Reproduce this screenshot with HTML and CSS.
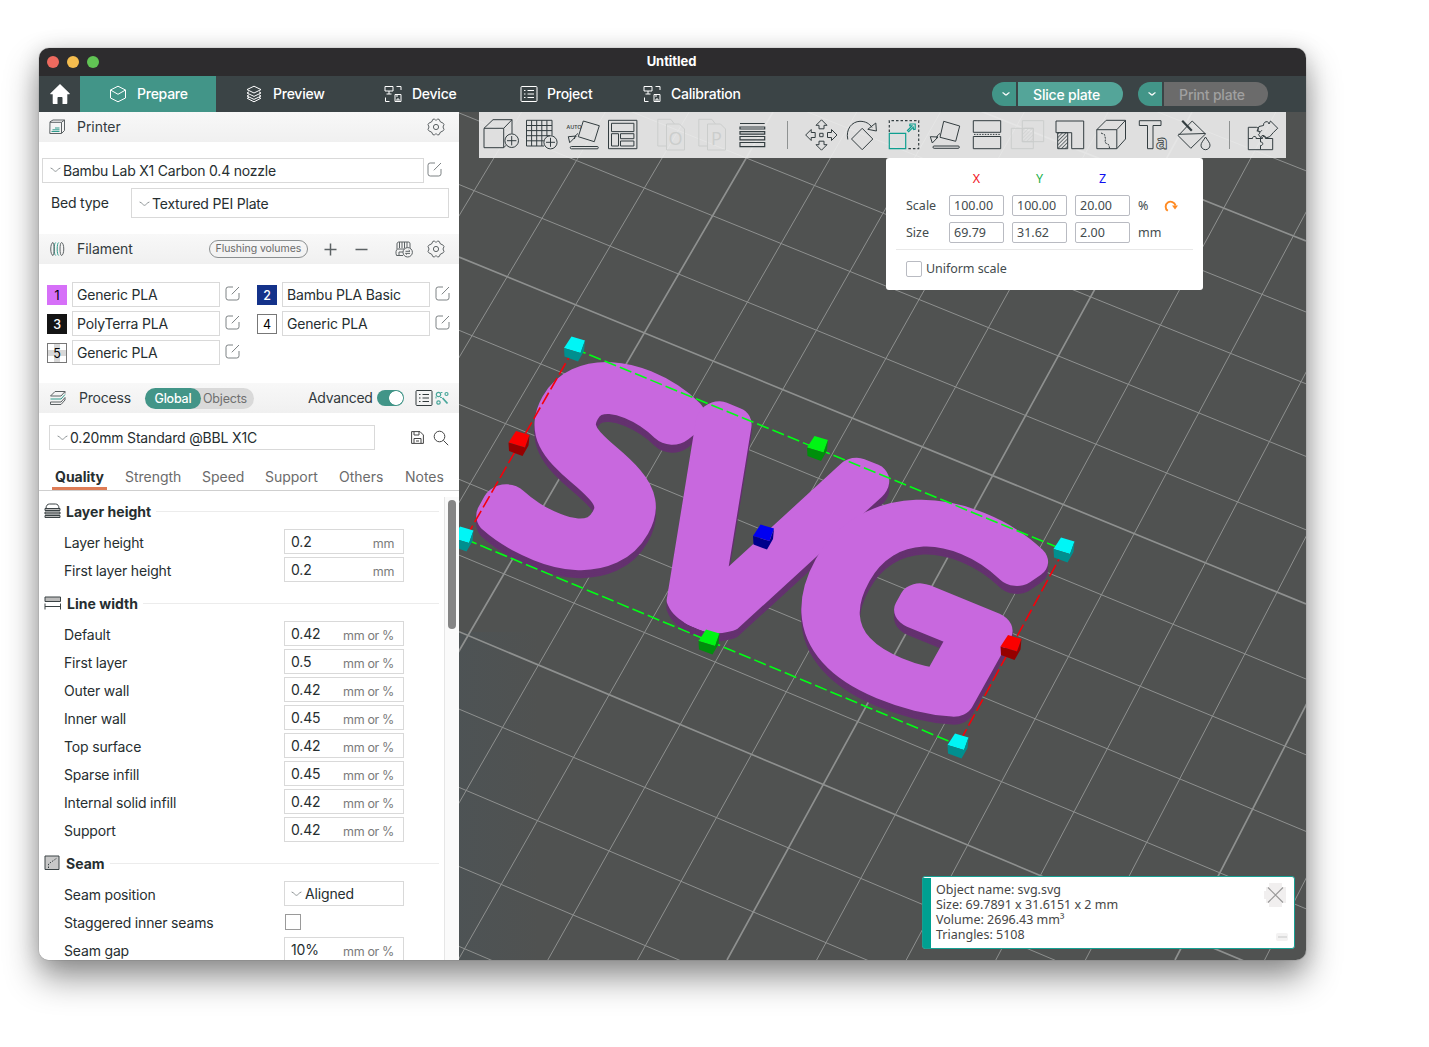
FILE: index.html
```html
<!DOCTYPE html>
<html lang="en">
<head>
<meta charset="utf-8">
<title>Untitled</title>
<link rel="stylesheet" href="styles.css">
</head>
<body>
<svg class="defs" aria-hidden="true">
  <defs>
    <symbol id="i-edit" viewBox="0 0 15 15"><path d="M8 1H3.2A2.2 2.2 0 0 0 1 3.200V11.800A2.200 2.200 0 0 0 3.200 14H11.800A2.200 2.200 0 0 0 14 11.800V7M6.800 8.300L14 1"/></symbol>
    <symbol id="i-chev" viewBox="0 0 11 6"><path d="M.6 1C3 1.500 4 4.300 5.500 4.300S8 1.500 10.400 1"/></symbol>
    <symbol id="i-gear" viewBox="0 0 18 18"><path d="M6 1.200h1.500l1 .8h1l1-.8H12l1.500 2.800 2.200.8 1.300 1.700-1 2.500 1 2.500-1.300 1.700-2.200.8L12 16.800h-1.500l-1-.8h-1l-1 .8H6L4.500 14l-2.200-.8L1 11.500 2 9 1 6.500l1.300-1.700L4.500 4z"/><circle cx="9" cy="9" r="2.600"/></symbol>
    <symbol id="i-device" viewBox="0 0 18 18"><path d="M1 1.500h8v4.500H1zM5 6v3M2.500 9h5M12.500 1.500H17v3.500M1.500 12.500v4h4M11 9.500h6v7h-6zM13 16.500v-2.500h2v2.500M13 9.500v2.500"/></symbol>
    <symbol id="i-list" viewBox="0 0 18 18"><rect x="1" y="1.500" width="16" height="15" rx="1"/><path d="M4 5.500h1.500M7.500 5.500H14M4 9h1.500M7.500 9H14M4 12.500h1.500M7.500 12.500H14"/></symbol>
    <g id="cube">
      <path class="cube-top" d="M-3-12.500L10.500-8.500 6 4-10.500-1z"/>
      <path class="cube-side" d="M-10.500-1L6 4 10.500-8.500 9.500 2 3.500 12.500-10 7.500z"/>
    </g>
    <clipPath id="round-foot"><path d="M150-60H500V200L398 222C382 290 352 306 325 306C290 306 266 296 252 250L150 225z"/></clipPath>
    <g id="letters" class="letters">
      <text class="ls" transform="translate(3 270) scale(3.480 3.480)">S</text>
      <g clip-path="url(#round-foot)"><text class="lv" transform="translate(212 325) scale(3.740 4.300)">V</text></g>
      <text class="lg" transform="translate(421 271) scale(3.780 3.460)">G</text>
    </g>
    <pattern id="hatch" width="2.600" height="2.600" patternUnits="userSpaceOnUse" patternTransform="rotate(45)"><path d="M0 0v2.600" stroke="#333d40" stroke-width="1.300"/></pattern>
    <pattern id="hatch-off" width="2.600" height="2.600" patternUnits="userSpaceOnUse" patternTransform="rotate(45)"><path d="M0 0v2.600" stroke="#cbcdcc" stroke-width="1"/></pattern>
    <linearGradient id="tint" x1="0" x2="1"><stop offset="0" stop-color="#4a5459" stop-opacity=".45"/><stop offset="1" stop-color="#4a5459" stop-opacity="0"/></linearGradient>
  </defs>
</svg>
<div class="window">
  <header class="titlebar">
    <div class="lights"><i class="red"></i><i class="amber"></i><i class="green"></i></div>
    <span>Untitled</span>
  </header>
  <nav class="nav">
    <a class="home"><svg width="20" height="20" viewBox="0 0 20 20"><path d="M10 0L.5 9.300c-.5.500-.2 1 .4 1H2.700V19c0 .6.400 1 1 1H7.500V14c0-.6.400-1 1-1h3c.6 0 1 .4 1 1v6h3.800c.6 0 1-.4 1-1v-8.700h1.800c.6 0 .9-.5.400-1z" fill="#fff"/></svg></a>
    <a class="tab prepare"><svg class="ico" width="18" height="18" viewBox="0 0 18 18"><path d="M9 1.200L16.500 5v8L9 16.800 1.500 13V5zM1.500 5L9 9.300 16.500 5"/></svg>Prepare</a>
    <a class="tab preview"><svg class="ico" width="18" height="18" viewBox="0 0 18 18"><path d="M9 1.200l7 3.400-7 3.400-7-3.400zM4 6.800L2 8l7 3.400L16 8l-2-1.200M4 9.800L2 11l7 3.400L16 11l-2-1.200M4 12.300l-1.800 1L9 16.800l6.800-3.500-1.800-1"/></svg>Preview</a>
    <a class="tab device"><svg class="ico" width="18" height="18"><use href="#i-device"/></svg>Device</a>
    <a class="tab project"><svg class="ico" width="18" height="18"><use href="#i-list"/></svg>Project</a>
    <a class="tab calibration"><svg class="ico" width="18" height="18"><use href="#i-device"/></svg>Calibration</a>
    <div class="actions">
      <div class="split"><button class="drop"><svg width="8" height="4" viewBox="0 0 8 4"><path d="M.5.600C2 .8 3 3 4 3S6 .8 7.500.600"/></svg></button><button class="main">Slice plate</button></div>
      <div class="split off"><button class="drop"><svg width="8" height="4" viewBox="0 0 8 4"><path d="M.5.600C2 .8 3 3 4 3S6 .8 7.500.600"/></svg></button><button class="main">Print plate</button></div>
    </div>
  </nav>
  <div class="body">
    <aside class="sidebar">
      <div class="head">
        <svg class="line" width="18" height="16" viewBox="0 0 18 16"><path d="M2 2.800L5 1h11.500v10.500l-3 3H1.800zM2 3.300h11.500v11M13.500 3.300L16.500 1"/><path class="teal" d="M3.500 12.500h8M4.500 10.800h7M7 9h4.500"/></svg>
        <span class="name">Printer</span>
        <svg class="line gear" width="18" height="18"><use href="#i-gear"/></svg>
      </div>
      <div class="printer-row"><div class="box printer-box"><svg class="chev"><use href="#i-chev"/></svg>Bambu Lab X1 Carbon 0.4 nozzle</div><svg class="edit"><use href="#i-edit"/></svg></div>
      <div class="bed-row"><span>Bed type</span><div class="box bed-box"><svg class="chev"><use href="#i-chev"/></svg>Textured PEI Plate</div></div>
      <div class="head filament">
        <svg class="line" width="18" height="16" viewBox="0 0 18 16"><path d="M4 1.500C1 2 1 14 4 14.500M12.500 1.500c3 .5 3 12.500 0 13"/><path class="teal" d="M6.700 1.500c-2 .5-2 12.500 0 13M9.700 1.500c-2 .5-2 12.500 0 13"/><path d="M4 1.500c1.500 1 1.500 12 0 13M12.500 1.500c-2 .5-2 12.500 0 13"/></svg>
        <span class="name">Filament</span>
        <span class="flush">Flushing volumes</span>
        <svg class="line plus" width="13" height="13" viewBox="0 0 13 13"><path d="M6.500.500v12M.5 6.500h12"/></svg>
        <svg class="line minus" width="13" height="13" viewBox="0 0 13 13"><path d="M.5 6.500h12"/></svg>
        <svg class="line ams" width="18" height="17" viewBox="0 0 18 17"><path d="M8 14.500H1.500c-1-3-.6-5.500 1-6.500h12M2 8V3c0-1.500 1-2 2-2h9c1.500 0 2 .5 2 2v4M4.500 1v6M7 1v6M9.500 1v6M12 1v6M4 14.500V11h4"/><circle cx="12.700" cy="11.300" r="4.700" fill="#f3f3f3"/><path d="M10.500 10.300h4.500l-1.300-1.200M15 12.400h-4.500l1.300 1.200"/></svg>
        <svg class="line gear" width="18" height="18"><use href="#i-gear"/></svg>
      </div>
      <div class="filaments">
        <div class="fil"><b class="sw c1">1</b><div class="box">Generic PLA</div><svg class="edit"><use href="#i-edit"/></svg></div>
        <div class="fil"><b class="sw c2">2</b><div class="box">Bambu PLA Basic</div><svg class="edit"><use href="#i-edit"/></svg></div>
        <div class="fil"><b class="sw c3">3</b><div class="box">PolyTerra PLA</div><svg class="edit"><use href="#i-edit"/></svg></div>
        <div class="fil"><b class="sw c4">4</b><div class="box">Generic PLA</div><svg class="edit"><use href="#i-edit"/></svg></div>
        <div class="fil"><b class="sw c5">5</b><div class="box">Generic PLA</div><svg class="edit"><use href="#i-edit"/></svg></div>
      </div>
      <div class="head process">
        <svg class="line" width="18" height="16" viewBox="0 0 18 16"><path d="M6 1.500h10L12 6H1.500zM16 1.500v2"/><path class="teal" d="M1.500 9H12L16 4.500"/><path d="M1.500 12v2.500H12L16 10V7.500M1.500 12H12L16 7.500"/></svg>
        <span class="name">Process</span>
        <div class="seg"><b>Global</b><span>Objects</span></div>
        <span class="adv">Advanced</span><i class="toggle"></i>
        <svg class="line lst" width="18" height="18"><use href="#i-list"/></svg>
        <svg class="line find" width="14" height="14" viewBox="0 0 14 14"><g class="teal"><circle cx="3.500" cy="3.500" r="2.200"/><circle cx="11.500" cy="3" r="1.500"/><circle cx="3.500" cy="11.500" r="1.700"/><path d="M7.500 7l5 5.500M6.500 1v1M.5 6.500h1M6 6v1" stroke-width="1.800"/></g></svg>
      </div>
      <div class="preset"><div class="box preset-box"><svg class="chev"><use href="#i-chev"/></svg>0.20mm Standard @BBL X1C</div>
        <svg class="line save" width="13" height="13" viewBox="0 0 13 13"><path d="M.6.600h8.400L12.400 4v8.400H.6zM3 .6V4h5V.6M3 12.400V7.500h7v4.900M5 10h3"/></svg>
        <svg class="line" width="16" height="16" viewBox="0 0 16 16"><circle cx="6.500" cy="6.500" r="5.300"/><path d="M10.400 10.400l4.800 4.800"/></svg></div>
      <div class="qtabs"><b>Quality</b><span>Strength</span><span>Speed</span><span>Support</span><span>Others</span><span>Notes</span></div>
      <div class="scroll">
        <div class="opts">
          <h3><svg class="line" width="17" height="16" viewBox="0 0 17 16"><path d="M2 5.500C2 2.500 3.500 1 5.500 1h6c2 0 3.500 1.500 3.500 4.500"/><path d="M1 5.500h15v2H1zM1 9h15v2H1zM1 12.500h15v2H1z" fill="#bbb"/></svg>Layer height</h3>
          <div class="row"><label>Layer height</label><div class="val">0.2<em>mm</em></div></div>
          <div class="row"><label>First layer height</label><div class="val">0.2<em>mm</em></div></div>
          <h3><svg class="line" width="18" height="14" viewBox="0 0 18 14"><path d="M1 1h15.500v4.500H1z" fill="#bbb"/><path d="M1 7.500v6M16.500 7.500v6M1 10.500h15.500"/></svg>Line width</h3>
          <div class="row"><label>Default</label><div class="val">0.42<em>mm or %</em></div></div>
          <div class="row"><label>First layer</label><div class="val">0.5<em>mm or %</em></div></div>
          <div class="row"><label>Outer wall</label><div class="val">0.42<em>mm or %</em></div></div>
          <div class="row"><label>Inner wall</label><div class="val">0.45<em>mm or %</em></div></div>
          <div class="row"><label>Top surface</label><div class="val">0.42<em>mm or %</em></div></div>
          <div class="row"><label>Sparse infill</label><div class="val">0.45<em>mm or %</em></div></div>
          <div class="row"><label>Internal solid infill</label><div class="val">0.42<em>mm or %</em></div></div>
          <div class="row"><label>Support</label><div class="val">0.42<em>mm or %</em></div></div>
          <h3><svg class="line" width="17" height="16" viewBox="0 0 17 16"><path d="M1 1h14v13.500H1z" fill="#c8c8c8"/><path d="M4.500 13V9L13 3" stroke-dasharray="1.500 1.300"/></svg>Seam</h3>
          <div class="row"><label>Seam position</label><div class="val pick"><svg class="chev"><use href="#i-chev"/></svg>Aligned</div></div>
          <div class="row"><label>Staggered inner seams</label><i class="check"></i></div>
          <div class="row"><label>Seam gap</label><div class="val">10%<em>mm or %</em></div></div>
        </div>
        <div class="track"><i></i></div>
      </div>
    </aside>
    <main class="stage">
      <svg class="scene" width="847" height="848" viewBox="0 0 847 848">
        <rect y="520" width="80" height="328" fill="url(#tint)"/>
        <g class="grid">
          <path d="M0-277.300L847 58.800M0-139.900L847 200M0-69.900L847 271.800M0 .9L847 344.400M0 72.500L847 417.800M0 218.300L847 567M0 292.400L847 642.800M0 367.300L847 719.400M0 443.100L847 796.800M0 597.100L847 954M0 675.400L847 1033.800M0 754.500L847 1114.400M0 834.400L847 1195.800"/>
          <path d="M62.600 0L-448.800 848M146.400 0L-359.200 848M230.200 0L-269.600 848M397.800 0L-90.400 848M481.600 0L-.8 848M565.400 0L88.800 848M649.200 0L178.400 848M816.800 0L357.600 848M900.600 0L447.200 848M984.400 0L536.800 848M1068.200 0L626.400 848M1235.800 0L805.600 848"/>
          <path class="bold" d="M0-209L847 129M0 145L847 492M0 519.700L847 875M314 0L-180 848M733 0L268 848M1152 0L716 848"/>
        </g>
        <g class="side">
          <use href="#letters" transform="matrix(.702 .288 -.34 .61 115 245)"/>
          <use href="#letters" transform="matrix(.702 .288 -.34 .61 115 243)"/>
          <use href="#letters" transform="matrix(.702 .288 -.34 .61 115 241)"/>
          <use href="#letters" transform="matrix(.702 .288 -.34 .61 115 239)"/>
        </g>
        <use class="face" href="#letters" transform="matrix(.702 .288 -.34 .61 115 237)"/>
        <g class="bounds">
          <path class="bx" d="M115 236.500L605 438M6 427L499 633"/>
          <path class="by" d="M115 236.500L6 427M605 438L499 633"/>
        </g>
        <g class="cyan"><use href="#cube" x="115.500" y="237"/><use href="#cube" x="605" y="438"/><use href="#cube" x="499" y="634"/><use href="#cube" x="4" y="427"/></g>
        <g class="redc"><use href="#cube" x="60" y="331.500"/><use href="#cube" x="552" y="535.500"/></g>
        <g class="greenc"><use href="#cube" x="358.500" y="336.500"/><use href="#cube" x="250" y="530"/></g>
        <g class="bluec"><use href="#cube" x="304.500" y="425"/></g>
      </svg>
      <div class="toolbar">
        <div class="ga">
          <svg viewBox="0 0 36 36"><path d="M1 11.300h19.700v19.400H1zM1 11.300L10 2.700h19l-8.300 8.600M29 2.700v14M20.700 30.700L23 28.300"/><circle cx="28.700" cy="23.700" r="6.800"/><path d="M28.700 19v9.400M24 23.700h9.400"/></svg>
          <svg viewBox="0 0 36 36"><path d="M20 29H2.500V3.300H28V18.500M2.500 8.500H28M2.500 13.600H28M2.500 18.700H26M2.500 23.800H19.800M7.600 3.300V29M12.700 3.300V29M17.800 3.300V29M22.900 3.300V19"/><circle cx="26.500" cy="25.300" r="6.600"/><path d="M26.500 20.800v9M22 25.300h9"/></svg>
          <svg viewBox="0 0 36 36"><text class="auto" x="1.500" y="12">AUTO</text><path d="M18.300 4l16 4.700-5 16-16-5zM3.300 19.700l8-.7-6.600 6.700zM9.500 22c0-2.500 1-4 3.500-5.500"/><rect x="5.300" y="29.500" width="28" height="2.300" rx="1.100"/></svg>
          <svg viewBox="0 0 36 36"><path d="M2.500 3.300h28.400v28.400H2.500zM5.500 6.300h22.400v8.300H5.500zM5.500 16.700h7V29h-7zM14.500 16.700h13.400v5H14.500zM14.500 24h13.400v5H14.500z"/></svg>
        </div>
        <div class="gb">
          <svg class="dis" viewBox="0 0 36 36"><path d="M13.500 7h13l5 5v21h-18zM13.500 29H4.800V2.300h13l3.500 4.500"/><text class="dl" x="15.500" y="27.500">O</text></svg>
          <svg class="dis" viewBox="0 0 36 36"><path d="M13.500 7h13l5 5v21h-18zM13.500 29H4.800V2.300h13l3.500 4.500"/><text class="dl" x="17" y="27.500">P</text></svg>
          <svg viewBox="0 0 36 36"><path d="M5 6.500h24.700M5 10h24.700v2H5zM5 14.700h24.700v2.500H5zM5 19.500h24.700v3.300H5zM5 25.500h24.700v4.200H5z" stroke-width="1.200"/></svg>
        </div>
        <i class="sep"></i>
        <div class="gc">
          <svg viewBox="0 0 36 36"><path d="M18.500 2.800l5.500 5.500h-3v3.500h-5V8.300h-3zM18.500 33.200l5.500-5.500h-3v-3.500h-5v3.500h-3zM2.700 18l5.500-5.500v3h4v5h-4v3zM34 18l-5.500-5.500v3h-4v5h4v3zM16.700 16.300h3.400v3.400h-3.400z"/></svg>
          <svg viewBox="0 0 36 36"><path d="M18.200 11.300L28.800 22 18.200 32.700 7.500 22zM3.800 22.500C1.500 12 8 4.500 16 4.300c5.500 0 9.500 2.200 12 6.200M31.800 6l.6 8-8.600-1.700z"/></svg>
          <svg viewBox="0 0 36 36"><path d="M3.300 15V3.700H32.700V31.700H21" stroke-dasharray="2.500 2" stroke-width="1.200"/><path class="teal" stroke-width="1.200" d="M3.300 16.300h16.400v15.400H3.300zM21.500 13.500l4.500-4.500-2.300-.3.300-1.700h5.200v5.200l-1.700.3-.3-2.300-4.500 4.500z"/></svg>
          <svg viewBox="0 0 36 36"><path d="M16.700 4.300l16 4.700-4 15.300-15.700-4zM3.300 19.700l7.700.3-5.700 6zM9.500 22c0-2.500 1-4 3.500-5.500"/><rect x="6" y="29" width="26.300" height="2.300" rx="1.100"/></svg>
          <svg viewBox="0 0 36 36"><path d="M4.300 3.700h27.400v11.600H4.300zM4.300 19.500h27.400v12.200H4.300z"/><path d="M5 17.400h26" stroke-dasharray="1.500 1.200"/></svg>
          <svg class="dis" viewBox="0 0 36 36"><path d="M1.300 11.300h22v20.400h-22zM12.300 3.700h21.400v21H12.300z"/><path d="M12.300 11.300h11v13.400h-11z" fill="url(#hatch-off)"/></svg>
          <svg viewBox="0 0 36 36"><path d="M4 4h27.700v27.700h-12v-16H4z"/><path d="M5.700 15.700h10v16h-10z" fill="url(#hatch)"/></svg>
          <svg viewBox="0 0 36 36"><path d="M3.800 12.700h20v19h-20zM3.800 12.700l9.400-9.400h19.300l-8.700 9.400M32.500 3.300V22l-8.700 9.700"/><path d="M8 16l3.500 1.500 1 4.500-.5 3.500 4 2.500.5 3" stroke-dasharray="2 1"/></svg>
          <svg viewBox="0 0 36 36"><path d="M4.300 3.700H26V8.500H18V31.700H12.500V8.500H4.300z"/><text class="ta" x="20.700" y="31.500">a</text></svg>
          <svg viewBox="0 0 36 36"><path d="M16.200 4L29.500 17 14.800 31.300 2.200 18.700zM2.200 17.300L29.500 16.500"/><path d="M6.200 3.700l9.600 10" stroke-width="2.200"/><path d="M29.500 20c2.500 4 4.500 6 4.500 8.200a4.500 4.500 0 0 1-9 0c0-2.200 2-4.200 4.500-8.200z"/></svg>
        </div>
        <i class="sep s2"></i>
        <svg class="puz" viewBox="0 0 36 36"><path d="M3.300 10.300h8.500c1.500 0 2 2 .8 3 0 2 3.500 2 4.200 0M3.300 10.300v22.400h24.400V21.500h-7c.8-3-4-3-3.200 0H11c1-3-4-2.500-3.500 0H3.300M15.500 32.500v-4c3 .5 3-4 0-3.500v-4M14 9.500l4.500-1c-.5-4 5-5.500 5.500-1.500l1.500-3 7.200 7.200-4.500 4.500-3.500 4-4.500 1.500c.5-4-5-3.500-4 0l-2.700-3.500c2.500-2 1-5-1.500-3.500z"/></svg>
      </div>
      <section class="scale">
        <div class="sgrid">
          <i></i><b class="x">X</b><b class="y">Y</b><b class="z">Z</b><i></i><i></i>
          <span>Scale</span><div class="num">100.00</div><div class="num">100.00</div><div class="num">20.00</div><span>%</span><svg width="14" height="14" viewBox="0 0 14 14"><path d="M3.800 11.800A5 5 0 1 1 11.500 6.500" fill="none" stroke="#ff8a22" stroke-width="1.900"/><path d="M8 6.500h6l-3 4z" fill="#ff8a22"/></svg>
          <span>Size</span><div class="num">69.79</div><div class="num">31.62</div><div class="num">2.00</div><span>mm</span><i></i>
        </div>
        <div class="uni"><i></i>Uniform scale</div>
      </section>
      <section class="info">
        <div class="txt">Object name: svg.svg<br>Size: 69.7891 x 31.6151 x 2 mm<br>Volume: 2696.43 mm³<br>Triangles: 5108</div>
        <div class="ctl"><svg width="26" height="26" viewBox="0 0 26 26"><path d="M7 1h13v24H7zM2 9h4v8H2zM4 5h20v16H4z" fill="#f1efef"/><path d="M6 5.500l15 15M21 5.500l-15 15" stroke="#999" stroke-width="1.200"/></svg><i></i></div>
      </section>
    </main>
  </div>
</div>
</body>
</html>
```
FILE: styles.css
```css
* { box-sizing: border-box; }
html { height: 1047px; overflow: hidden; }
body { margin: 0; padding: 48px 0 0 39px; height: 1047px; background: #fff; font: 14px/18px Inter, "Liberation Sans", sans-serif; color: #262e30; overflow: hidden; }
.defs { position: absolute; width: 0; height: 0; }
svg { flex: none; fill: none; }
i, em { font-style: normal; }
.window { width: 1267px; height: 912px; border-radius: 10px; overflow: hidden; display: flex; flex-direction: column; box-shadow: 0 0 1px rgba(0,0,0,.6), 0 18px 34px rgba(0,0,0,.42), 0 2px 22px rgba(0,0,0,.14); background: #fff; }

.titlebar { height: 28px; background: #2d2c2e; display: flex; align-items: center; color: #fff; font-size: 13px; font-weight: 700; letter-spacing: -.05px; }
.titlebar span { flex: 1; text-align: center; padding-right: 78px; padding-bottom: 2px; }
.lights { display: flex; gap: 8px; width: 76px; padding-left: 8px; }
.lights i { width: 12px; height: 12px; border-radius: 50%; }
.red { background: #ee6a5f; } .amber { background: #f5bd4f; } .green { background: #61c454; }

.nav { height: 36px; background: #3b4446; display: flex; color: #fff; font-weight: 500; letter-spacing: -.25px; }
.nav a { display: flex; align-items: center; }
.home { width: 41px; padding-left: 11px; }
.tab { padding-left: 29px; gap: 10px; }
.ico { stroke: #fff; stroke-width: 1; }
.prepare { width: 136px; background: #429588; }
.preview { width: 138px; }
.device { width: 136px; padding-left: 30px; }
.project { width: 123px; padding-left: 30px; gap: 9px; }
.calibration { width: 160px; padding-left: 30px; }
.actions { margin-left: auto; margin-right: 38px; display: flex; align-items: center; gap: 15px; }
.split { display: flex; gap: 2px; height: 24px; }
.split button { border: 0; padding: 0; color: #fff; font: 500 14px/24px Inter, sans-serif; letter-spacing: -.2px; }
.drop { width: 24px; background: #429588; border-radius: 12px 0 0 12px; display: flex; align-items: center; justify-content: center; }
.drop svg { stroke: #fff; stroke-width: 1.2; margin-left: 4px; }
.split .main { width: 105px; padding: 1px 8px 0 0; background: #54a599; border-radius: 0 12px 12px 0; }
.split.off .main { width: 104px; background: #6b6b6b; color: #a0a0a0; }

.body { flex: 1; min-height: 0; display: grid; grid-template-columns: 420px 1fr; }
.sidebar { display: flex; flex-direction: column; min-height: 0; background: #fff; letter-spacing: -.15px; }
.head { height: 30px; flex: none; display: flex; align-items: center; padding: 0 14px 0 9px; background: linear-gradient(#f8f8f8, #f0f0f0); }
.head .name { margin-left: 11px; letter-spacing: -.04px; color: #323a3d; }
.line { stroke: #5c6264; stroke-width: 1; }
.teal { stroke: #2f9a8b; }
.gear { margin-left: auto; }
.box { border: 1px solid #d9d9d9; height: 25px; display: flex; align-items: center; background: #fff; padding-left: 4px; white-space: nowrap; }
.chev { width: 11px; height: 6px; stroke: #8d9395; margin: -1px 2px 0 3px; }
.edit { width: 15px; height: 15px; stroke: #7d8284; }
.printer-row { display: flex; margin: 16px 0 0 3px; gap: 3px; align-items: center; }
.printer-row .edit, .fil .edit { margin-top: -2px; }
.printer-box { width: 382px; padding-left: 4px; letter-spacing: -.21px; }
.bed-row { display: flex; align-items: center; margin: 5px 0 16px 12px; }
.bed-row span { width: 80px; letter-spacing: -.2px; }
.bed-box { width: 318px; height: 30px; padding-top: 2px; letter-spacing: -.2px; }

.filament { padding-left: 10px; }
.filament .name { margin-left: 10px; }
.flush { margin-left: 76px; width: 99px; height: 18px; border: 1px solid #8b8f90; border-radius: 9px; font-size: 10.5px; line-height: 15px; color: #6b6b6b; text-align: center; letter-spacing: -.05px; white-space: nowrap; margin-right: 16px; flex: none; }
.minus { margin-left: 18px; }
.plus, .minus { stroke-width: 1.500; }
.ams { margin-left: 27px; }
.ams + .gear { margin-left: auto; }
.filaments { display: grid; grid-template-columns: 210px 200px; row-gap: 4px; padding: 18px 0 18px 8px; }
.fil { display: flex; align-items: center; }
.fil .box { width: 148px; letter-spacing: -.17px; margin: 0 5px; padding-top: 1px; }
.sw { width: 20px; height: 20px; font-size: 12.5px; font-weight: 400; line-height: 21px; text-align: center; color: #000; }
.c1 { background: #d670f8; }
.c2 { background: #14328a; color: #fff; font-weight: 500; }
.c3 { background: #141414; color: #fff; font-weight: 500; }
.c4, .c5 { border: 1px solid #777; line-height: 19px; }
.c5 { background: linear-gradient(#d8d8d8, #d8d8d8) 6px 0 / 6px 18px no-repeat, linear-gradient(#d8d8d8, #d8d8d8) 0 6px / 18px 6px no-repeat, #fff; }

.process { padding-left: 10px; }
.process .name { margin-left: 12px; width: 52px; letter-spacing: -.2px; }
.seg { display: flex; margin-left: 14px; width: 109px; height: 21px; border-radius: 11px; background: #d9d9d9; font-size: 12.5px; line-height: 21px; letter-spacing: -.2px; flex: none; }
.seg b { width: 56px; border-radius: 11px; background: #429588; color: #fff; font-weight: 500; text-align: center; }
.seg span { padding-left: 2px; color: #6f6f6f; }
.adv { margin-left: 54px; letter-spacing: -.3px; width: 64px; color: #323a3d; flex: none; }
.toggle { width: 27px; height: 16px; border-radius: 8px; margin-left: 5px; background: radial-gradient(circle at 19px 8px, #fff 6.500px, #429588 7.200px); flex: none; }
.lst { margin-left: 11px; stroke: #333b3d; flex: none; }
.find { margin-left: 2px; margin-right: -6px; }
.find .teal { stroke: #4aa79b; stroke-width: 1.2; }

.preset { display: flex; align-items: center; padding: 12px 0 0 10px; }
.preset-box { width: 326px; letter-spacing: -.18px; padding-top: 1px; }
.save { margin: 0 9px 0 36px; }
.preset .line { stroke: #444; }
.qtabs { margin-top: 15px; height: 26px; padding-left: 13px; border-bottom: 1px solid #cfcfcf; display: flex; color: #6b6b6b; line-height: 24px; letter-spacing: -.02px; }
.qtabs > * { flex: none; }
.qtabs b { width: 55px; text-align: center; color: #262e30; font-weight: 700; letter-spacing: -.05px; background: linear-gradient(#de7c55, #de7c55) bottom / 100% 3px no-repeat; margin-right: 18px; }
.qtabs span:nth-child(2) { width: 77px; }
.qtabs span:nth-child(3) { width: 63px; }
.qtabs span:nth-child(4) { width: 74px; }
.qtabs span:nth-child(5) { width: 66px; }

.scroll { flex: 1; min-height: 0; display: flex; overflow: hidden; }
.opts { width: 405px; padding-top: 1px; }
.opts h3 { margin: 0; height: 36px; padding: 4px 5px 0 5px; display: flex; align-items: center; font-size: 14px; font-weight: 700; letter-spacing: .03px; }
.opts h3 svg { margin-right: 5px; margin-top: -2px; stroke: #3a4244; }
.opts h3::after { content: ""; flex: 1; height: 1px; background: #ececec; margin-left: 5px; margin-top: -1px; }
.row { height: 28px; display: flex; padding-left: 25px; align-items: flex-start; }
.row label { width: 220px; line-height: 30px; letter-spacing: -.17px; }
.row label, .val { white-space: nowrap; }
.val { width: 120px; height: 25px; margin-top: 1px; border: 1px solid #d9d9d9; padding: 0 9px 0 6px; display: flex; line-height: 24px; letter-spacing: -.15px; }
.val em { margin-left: auto; font-size: 12.5px; line-height: 28px; color: #7b7b7b; letter-spacing: -.35px; }
.val.pick .chev { margin: 9px 3px 0 0; }
.check { width: 16px; height: 16px; margin: 6px 0 0 1px; border: 1px solid #9a9a9a; }
.track { width: 15px; margin-top: 6px; border-left: 1px solid #e6e6e6; background: #fafafa; padding: 3px 0 0 3px; }
.track i { display: block; width: 8px; height: 129px; border-radius: 4px; background: #858585; }

.stage { position: relative; background: #505251; overflow: hidden; font-family: "Noto Sans", sans-serif; }
.scene { display: block; }
.grid { stroke: #8e908f; stroke-width: 1; }
.grid .bold { stroke-width: 1.700; }
.letters { font: 300 100px "Open Sans", sans-serif; stroke-linejoin: round; }
.ls { stroke-width: 17.500px; }
.lv { stroke-width: 14px; }
.lg { stroke-width: 15px; }
.side { fill: #64316f; stroke: #64316f; }
.face { fill: #c868de; stroke: #c868de; }
.bounds { stroke-width: 1.600; }
.bx { stroke: #00ff14; stroke-dasharray: 12.500 4; }
.by { stroke: #f5000a; stroke-dasharray: 13 4; }
.cyan { fill: #00f6f6; color: #008f8f; } .redc { fill: #fa0000; color: #960000; }
.greenc { fill: #00f514; color: #008f0c; } .bluec { fill: #0000f2; color: #00008c; }
.cube-side { fill: currentColor; }

.toolbar { position: absolute; left: 20px; top: 0; width: 807px; height: 46px; padding-left: 1px; background: rgba(238,238,238,.9); display: flex; align-items: center; color: #333d40; }
.toolbar svg { width: 36px; height: 36px; stroke: currentColor; stroke-width: 1; }
.toolbar .teal { stroke: #0f9f90; }
.toolbar .dis { color: #cbcdcc; }
.ga, .gb, .gc { display: flex; justify-content: space-around; flex: none; }
.ga { width: 164px; } .gb { width: 122px; margin-left: 7px; } .gc { width: 415px; margin-left: 12px; }
.sep { width: 1px; height: 28px; background: #8f9292; margin-left: 14px; flex: none; }
.s2 { margin-left: 14px; }
.puz { margin-left: 15px; }
.toolbar text { fill: currentColor; stroke: none; font-family: "Open Sans", sans-serif; }
.auto { font-size: 5.500px; font-weight: 600; }
.toolbar .dl { font-size: 18px; }
.toolbar .ta { font-size: 20px; font-weight: 700; fill: none; stroke: currentColor; stroke-width: .8; }

.scale { position: absolute; left: 427px; top: 46px; width: 317px; height: 132px; background: #fff; border-radius: 3px; padding: 10px; font-size: 12.5px; color: #434b4d; }
.sgrid { display: grid; grid-template-columns: 35px 55px 55px 55px 18px 14px; column-gap: 8px; row-gap: 6px; grid-template-rows: 21px 21px 21px; align-items: center; padding-left: 10px; height: 82px; border-bottom: 1px solid #e8e8e8; }
.sgrid b { font-weight: 400; text-align: center; }
.sgrid .x { color: #f01020; } .sgrid .y { color: #18b04a; } .sgrid .z { color: #1010f0; }
.num { height: 21px; border: 1px solid #b9bbc2; border-radius: 2px; padding-left: 4px; line-height: 19px; }
.uni { display: flex; gap: 4px; align-items: center; padding: 10px 0 0 10px; letter-spacing: -.05px; }
.uni i { width: 16px; height: 16px; border: 1px solid #b9bbc2; border-radius: 2px; }
.info { position: absolute; left: 463px; top: 764px; width: 373px; height: 73px; border: 1px solid #17a093; border-radius: 3px; background: linear-gradient(#00a091, #00a091) 0 1px / 8px 70px no-repeat, #fff; padding: 5px 6px 0 13px; display: flex; justify-content: space-between; font-size: 12.5px; line-height: 15px; color: #454545; }
.ctl { display: flex; flex-direction: column; align-items: flex-end; gap: 25px; }
.ctl i { width: 12px; height: 8px; border-radius: 2px; background: linear-gradient(#ddd, #ddd) center / 9px 2px no-repeat, #f3f2f2; }
```
